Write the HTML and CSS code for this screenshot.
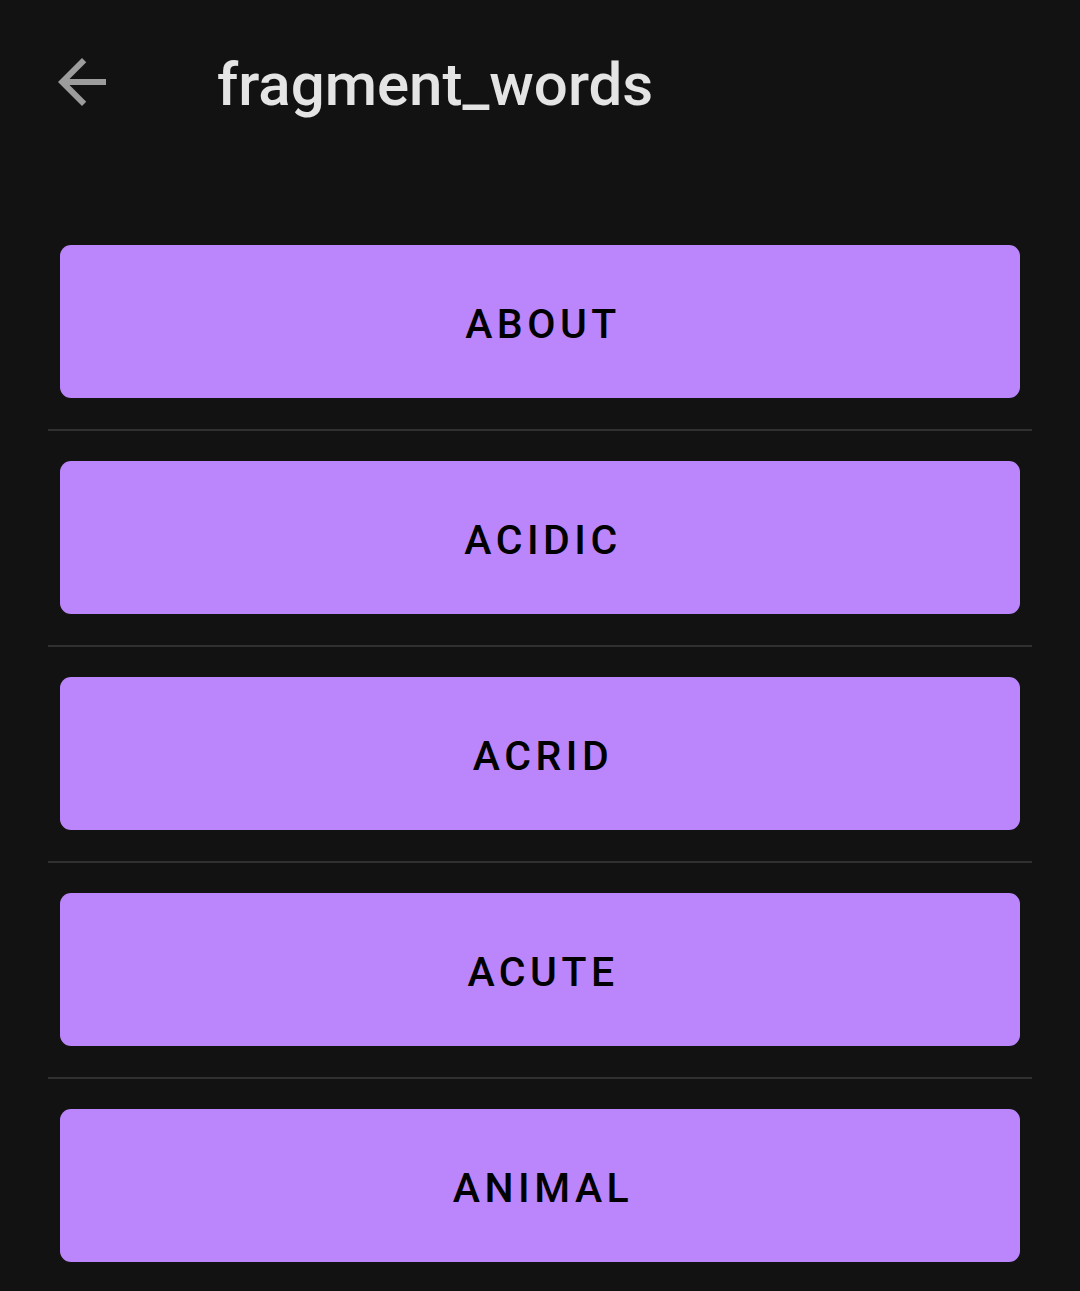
FILE: index.html
```html
<!DOCTYPE html>
<html>
<head>
<meta charset="utf-8">
<link rel="stylesheet" href="styles.css">
</head>
<body>
<div class="app">
  <header class="toolbar">
    <svg class="back" viewBox="0 0 24 24" width="72" height="72"><path d="M20 11H7.83l5.59-5.59L12 4l-8 8 8 8 1.41-1.41L7.83 13H20v-2z" fill="#9c9c9c"/></svg>
    <h1 class="title">fragment_words</h1>
  </header>
  <ul class="list">
    <li class="item"><button class="word">ABOUT</button></li>
    <li class="item"><button class="word">ACIDIC</button></li>
    <li class="item"><button class="word">ACRID</button></li>
    <li class="item"><button class="word">ACUTE</button></li>
    <li class="item"><button class="word">ANIMAL</button></li>
  </ul>
</div>
</body>
</html>
```

FILE: styles.css
```css
html, body {
  margin: 0;
  padding: 0;
  background: #121212;
}
body {
  width: 1080px;
  height: 1291px;
  overflow: hidden;
  font-family: Roboto, "Noto Sans", sans-serif;
}
.toolbar {
  display: flex;
  align-items: flex-start;
  height: 168px;
  padding-left: 46px;
  box-sizing: border-box;
}
.back {
  display: block;
  margin-top: 46px;
}
.title {
  margin: 50px 0 0 99px;
  font-weight: 500;
  font-size: 60px;
  color: #e4e4e4;
  line-height: 70px;
}
.list {
  list-style: none;
  margin: 77px 0 0 0;
  padding: 0 48px;
}
.item {
  padding: 0 12px 31px;
  border-bottom: 2px solid #303030;
  margin-bottom: 30px;
}
.word {
  display: block;
  width: 100%;
  height: 153px;
  border: none;
  border-radius: 11px;
  background: #bb86fc;
  color: #000;
  font-family: Roboto, "Noto Sans", sans-serif;
  font-weight: 500;
  font-size: 41px;
  letter-spacing: 4.5px;
  padding: 4px 0 0 6px;
  cursor: pointer;
}
```
